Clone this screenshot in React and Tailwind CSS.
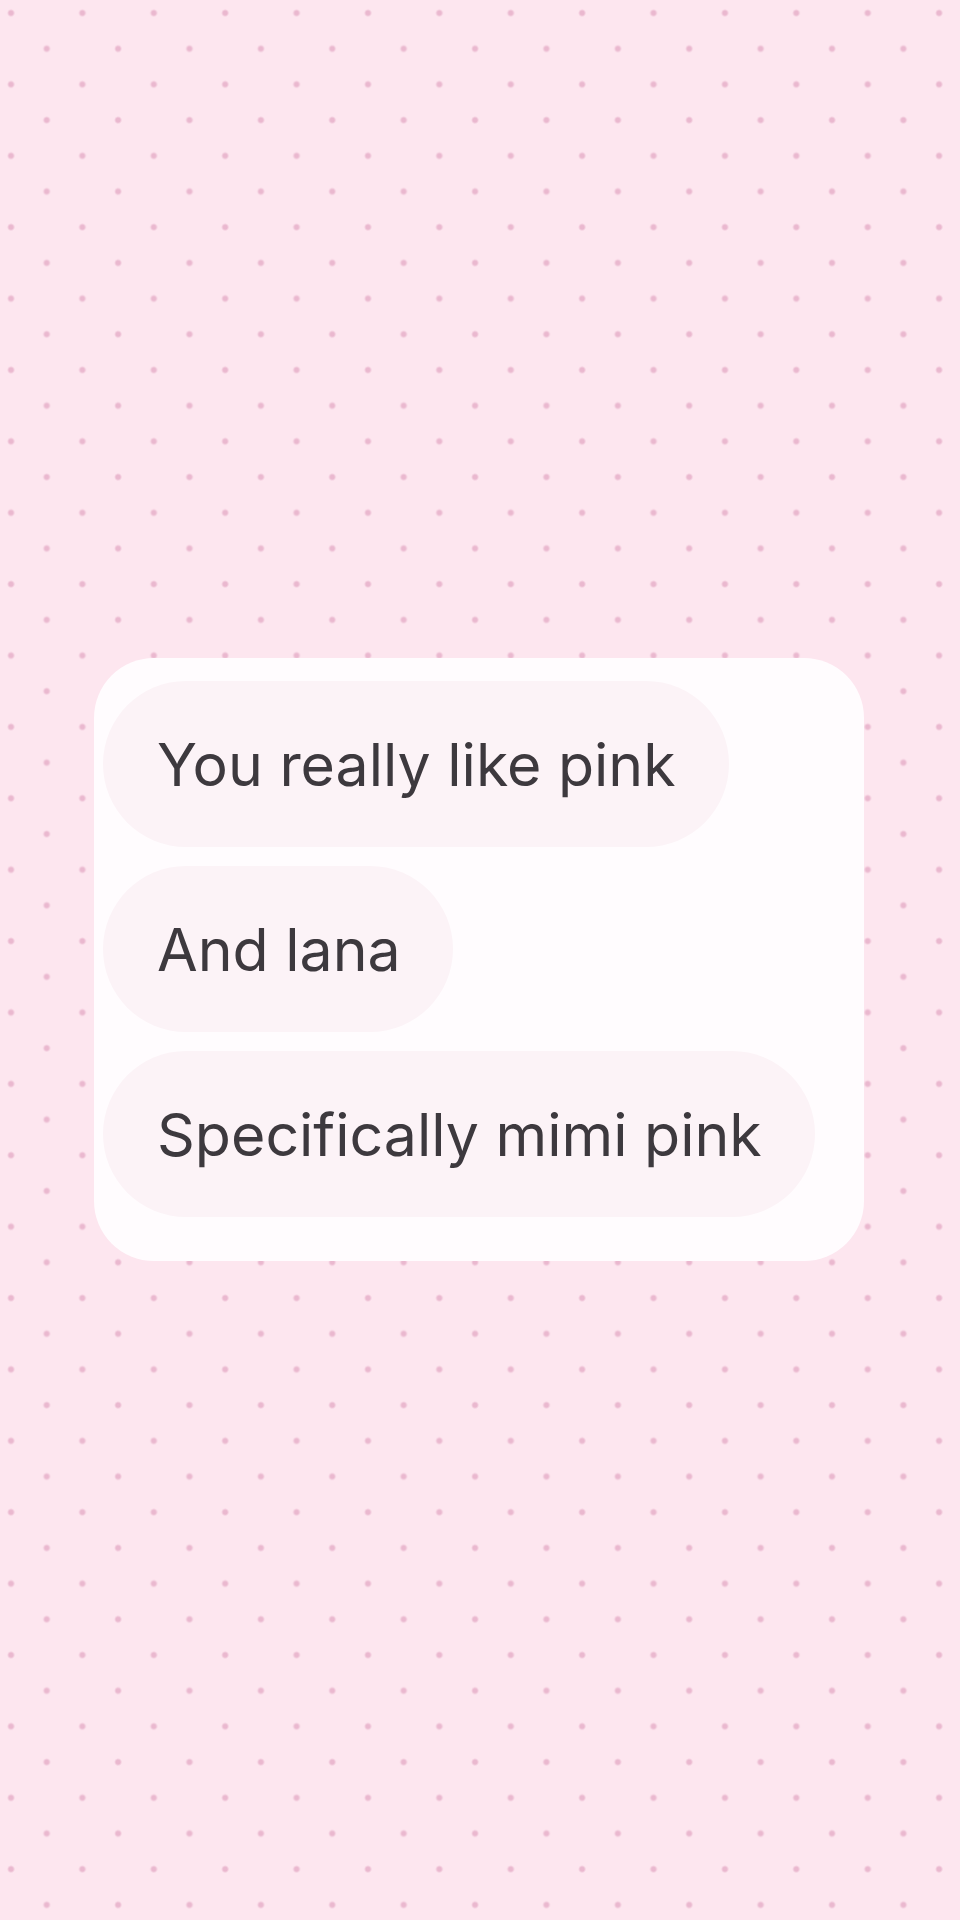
import React from 'react';

const messages = [
  { id: 1, text: 'You really like pink', width: 'w-[626px]' },
  { id: 2, text: 'And lana', width: 'w-[350px]' },
  { id: 3, text: 'Specifically mimi pink', width: 'w-[712px]' },
];

const App = () => {
  return (
    <div className="h-[1920px] w-full bg-[#fde6ef] bg-[image:radial-gradient(circle_at_11px_13px,#eab8cf_0px,#eab8cf_2px,transparent_4px),radial-gradient(circle_at_46.7px_48.7px,#eab8cf_0px,#eab8cf_2px,transparent_4px)] bg-[length:71.4px_71.4px] pt-[658px] pl-[94px] font-['Inter','Liberation_Sans',sans-serif]">
      {/* Chat card */}
      <div className="w-[770px] rounded-[60px] bg-[#fffcfe] pt-[23px] pb-[44px] pl-[9px] flex flex-col gap-[19px]">
        {messages.map((msg) => (
          <div
            key={msg.id}
            className={`${msg.width} h-[166px] rounded-full bg-[#fcf3f7] flex items-center pl-[54px]`}
          >
            <span className="text-[59px] leading-none text-[#3d393e] whitespace-nowrap">{msg.text}</span>
          </div>
        ))}
      </div>
    </div>
  );
};

export default App;
